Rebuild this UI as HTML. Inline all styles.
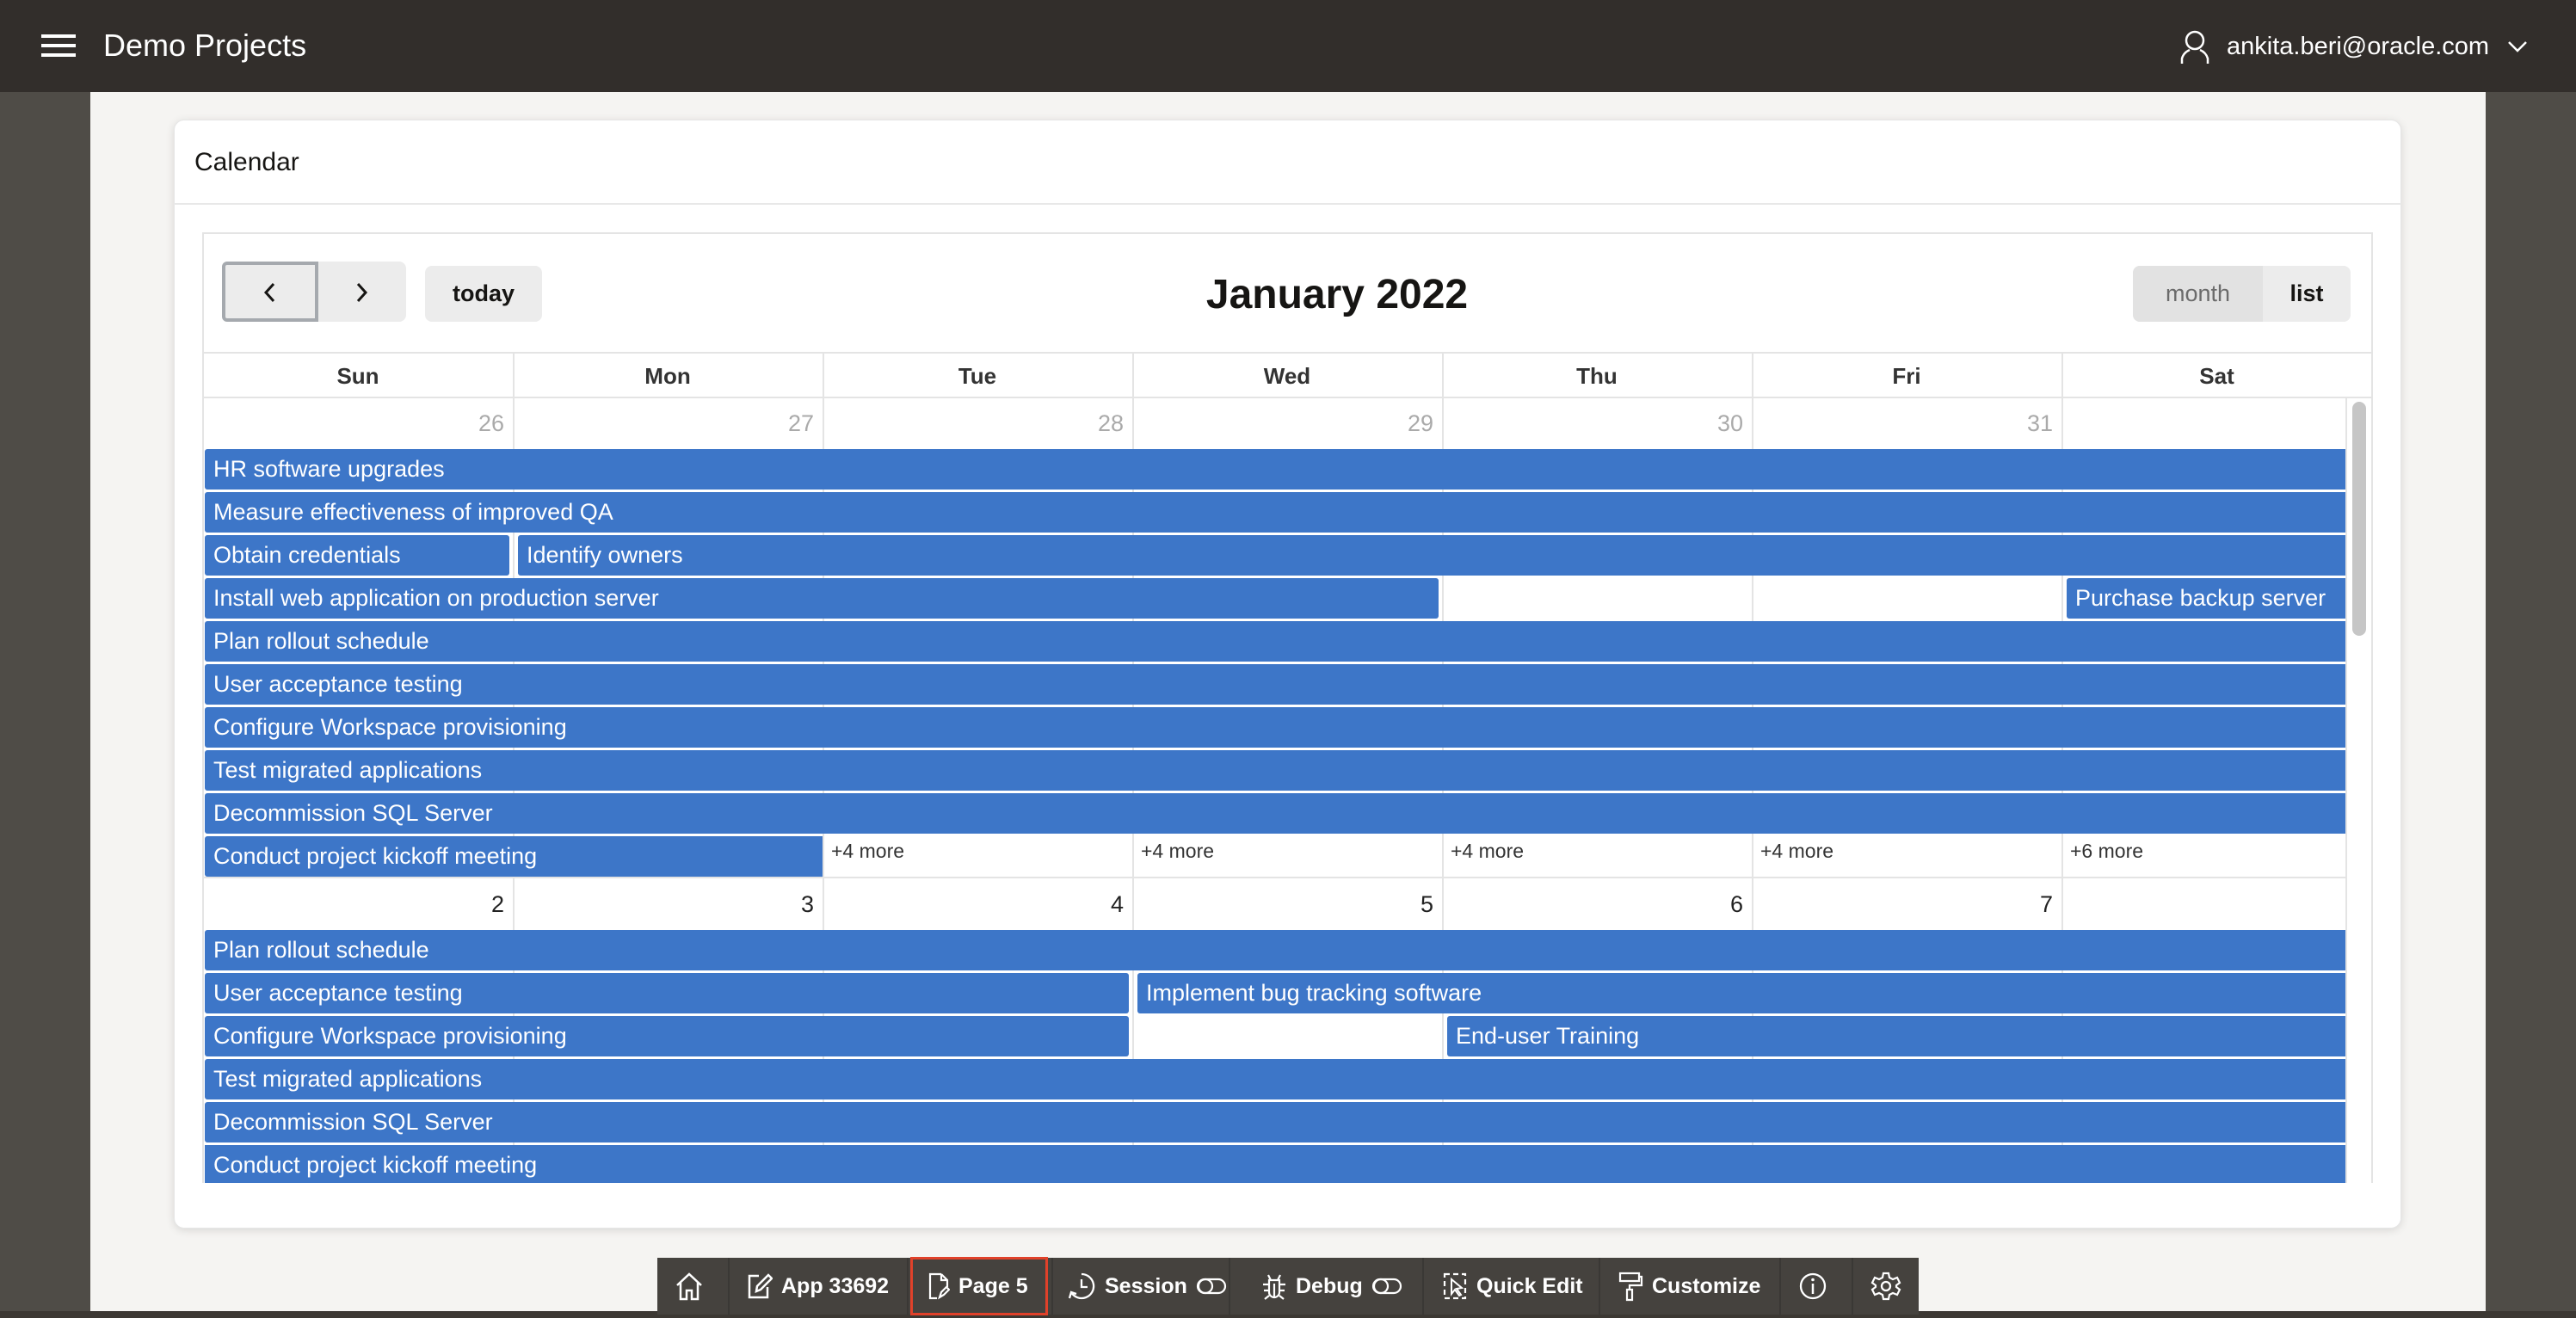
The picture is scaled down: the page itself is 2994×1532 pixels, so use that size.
<!DOCTYPE html>
<html><head><meta charset="utf-8"><style>
*{box-sizing:border-box;margin:0;padding:0}
body{width:2994px;height:1532px;position:relative;overflow:hidden;background:#f5f4f2;font-family:"Liberation Sans",sans-serif}
.a{position:absolute}
.ev{position:absolute;height:47px;background:#3d76c8;color:#fff;font-size:27px;line-height:47px;padding-left:10px;white-space:nowrap;overflow:hidden;border-radius:3px}
.ev.f{border-top-right-radius:0;border-bottom-right-radius:0}
.dn{position:absolute;font-size:27px;line-height:57px;text-align:right;width:340px}
.more{position:absolute;font-size:23px;color:#333;line-height:34px}
.vl{position:absolute;width:2px;background:#e4e4e4}
.tb{position:absolute;top:1462px;height:66px;color:#fff;font-size:25px;font-weight:bold;line-height:66px;display:flex;align-items:center;gap:10px}
.sep{position:absolute;top:1462px;height:66px;width:2px;background:#3a3835}
</style></head><body>
<div class="a" style="left:0;top:0;width:105px;height:1532px;background:#4f4c47"></div>
<div class="a" style="left:2889px;top:0;width:105px;height:1532px;background:#4f4c47"></div>
<div class="a" style="left:0;top:1524px;width:2994px;height:8px;background:#3c3833"></div>
<div class="a" style="left:0;top:0;width:2994px;height:107px;background:#322e2b"></div>
<div class="a" style="left:48px;top:40px;width:40px;height:4px;background:#fff"></div>
<div class="a" style="left:48px;top:51px;width:40px;height:4px;background:#fff"></div>
<div class="a" style="left:48px;top:62px;width:40px;height:4px;background:#fff"></div>
<div class="a" style="left:120px;top:28px;font-size:36px;color:#fff;line-height:50px">Demo Projects</div>
<svg class="a" style="left:2534px;top:34px" width="34" height="42" viewBox="0 0 34 42"><circle cx="17" cy="13" r="10" fill="none" stroke="#fff" stroke-width="2.5"/><path d="M2 40 V34 Q4 27 11 24 M32 40 V34 Q30 27 23 24" fill="none" stroke="#fff" stroke-width="2.5"/></svg>
<div class="a" style="left:2588px;top:30px;font-size:29px;color:#fff;line-height:48px">ankita.beri@oracle.com</div>
<svg class="a" style="left:2914px;top:46px" width="24" height="16"><path d="M2 3 L12 13 L22 3" fill="none" stroke="#fff" stroke-width="2.5"/></svg>
<div class="a" style="left:202px;top:139px;width:2589px;height:1289px;background:#fff;border-radius:12px;box-shadow:0 2px 10px rgba(0,0,0,.12);border:1px solid #e6e6e6"></div>
<div class="a" style="left:226px;top:168px;font-size:30px;color:#161513;line-height:42px">Calendar</div>
<div class="a" style="left:202px;top:236px;width:2589px;height:2px;background:#e8e8e8"></div>
<div class="a" style="left:235px;top:270px;width:2523px;height:1105px;border:2px solid #e4e4e4;border-bottom:none"></div>
<div class="a" style="left:258px;top:304px;width:214px;height:70px;background:#ececec;border-radius:8px"></div>
<div class="a" style="left:258px;top:304px;width:112px;height:70px;border:4px solid #a5a9ae;border-radius:6px 0 0 6px"></div>
<svg class="a" style="left:302px;top:326px" width="24" height="28"><path d="M16 4 L7 14 L16 24" fill="none" stroke="#161513" stroke-width="3"/></svg>
<svg class="a" style="left:408px;top:326px" width="24" height="28"><path d="M8 4 L17 14 L8 24" fill="none" stroke="#161513" stroke-width="3"/></svg>
<div class="a" style="left:494px;top:309px;width:136px;height:65px;background:#ececec;border-radius:8px;font-size:27px;font-weight:bold;color:#161513;line-height:65px;text-align:center">today</div>
<div class="a" style="left:1300px;top:308px;width:508px;text-align:center;font-size:48px;font-weight:bold;color:#161513;line-height:70px">January 2022</div>
<div class="a" style="left:2479px;top:309px;width:253px;height:65px;background:#ececec;border-radius:8px"></div>
<div class="a" style="left:2479px;top:309px;width:151px;height:65px;background:#e2e2e2;border-radius:8px 0 0 8px;font-size:27px;color:#6b6b6b;line-height:65px;text-align:center">month</div>
<div class="a" style="left:2630px;top:309px;width:102px;height:65px;font-size:27px;font-weight:bold;color:#161513;line-height:65px;text-align:center">list</div>
<div class="a" style="left:236px;top:409px;width:2521px;height:2px;background:#e4e4e4"></div>
<div class="a" style="left:236px;top:461px;width:2521px;height:2px;background:#e4e4e4"></div>
<div class="a" style="left:236px;top:412px;width:2521px;height:50px;font-size:26px;font-weight:bold;color:#333;line-height:50px;display:flex">
<div style="width:360px;text-align:center">Sun</div><div style="width:360px;text-align:center">Mon</div><div style="width:360px;text-align:center">Tue</div><div style="width:360px;text-align:center">Wed</div><div style="width:360px;text-align:center">Thu</div><div style="width:360px;text-align:center">Fri</div><div style="width:361px;text-align:center">Sat</div></div>
<div class="vl" style="left:596px;top:411px;height:964px"></div>
<div class="vl" style="left:956px;top:411px;height:964px"></div>
<div class="vl" style="left:1316px;top:411px;height:964px"></div>
<div class="vl" style="left:1676px;top:411px;height:964px"></div>
<div class="vl" style="left:2036px;top:411px;height:964px"></div>
<div class="vl" style="left:2396px;top:411px;height:964px"></div>
<div class="vl" style="left:2726px;top:463px;height:912px"></div>
<div class="a" style="left:2734px;top:467px;width:16px;height:272px;background:#c6c6c6;border-radius:8px"></div>
<div class="dn" style="left:246px;top:464px;color:#aaa">26</div>
<div class="dn" style="left:606px;top:464px;color:#aaa">27</div>
<div class="dn" style="left:966px;top:464px;color:#aaa">28</div>
<div class="dn" style="left:1326px;top:464px;color:#aaa">29</div>
<div class="dn" style="left:1686px;top:464px;color:#aaa">30</div>
<div class="dn" style="left:2046px;top:464px;color:#aaa">31</div>
<div class="ev f" style="left:238px;top:522px;width:2488px">HR software upgrades</div>
<div class="ev f" style="left:238px;top:572px;width:2488px">Measure effectiveness of improved QA</div>
<div class="ev" style="left:238px;top:622px;width:354px">Obtain credentials</div>
<div class="ev f" style="left:602px;top:622px;width:2124px">Identify owners</div>
<div class="ev" style="left:238px;top:672px;width:1434px">Install web application on production server</div>
<div class="ev f" style="left:2402px;top:672px;width:324px">Purchase backup server</div>
<div class="ev f" style="left:238px;top:722px;width:2488px">Plan rollout schedule</div>
<div class="ev f" style="left:238px;top:772px;width:2488px">User acceptance testing</div>
<div class="ev f" style="left:238px;top:822px;width:2488px">Configure Workspace provisioning</div>
<div class="ev f" style="left:238px;top:872px;width:2488px">Test migrated applications</div>
<div class="ev f" style="left:238px;top:922px;width:2488px">Decommission SQL Server</div>
<div class="ev f" style="left:238px;top:972px;width:718px">Conduct project kickoff meeting</div>
<div class="more" style="left:966px;top:972px">+4 more</div>
<div class="more" style="left:1326px;top:972px">+4 more</div>
<div class="more" style="left:1686px;top:972px">+4 more</div>
<div class="more" style="left:2046px;top:972px">+4 more</div>
<div class="more" style="left:2406px;top:972px">+6 more</div>
<div class="a" style="left:236px;top:1019px;width:2490px;height:2px;background:#e4e4e4"></div>
<div class="dn" style="left:246px;top:1023px;color:#222">2</div>
<div class="dn" style="left:606px;top:1023px;color:#222">3</div>
<div class="dn" style="left:966px;top:1023px;color:#222">4</div>
<div class="dn" style="left:1326px;top:1023px;color:#222">5</div>
<div class="dn" style="left:1686px;top:1023px;color:#222">6</div>
<div class="dn" style="left:2046px;top:1023px;color:#222">7</div>
<div class="ev f" style="left:238px;top:1081px;width:2488px">Plan rollout schedule</div>
<div class="ev" style="left:238px;top:1131px;width:1074px">User acceptance testing</div>
<div class="ev f" style="left:1322px;top:1131px;width:1404px">Implement bug tracking software</div>
<div class="ev" style="left:238px;top:1181px;width:1074px">Configure Workspace provisioning</div>
<div class="ev f" style="left:1682px;top:1181px;width:1044px">End-user Training</div>
<div class="ev f" style="left:238px;top:1231px;width:2488px">Test migrated applications</div>
<div class="ev f" style="left:238px;top:1281px;width:2488px">Decommission SQL Server</div>
<div class="ev f" style="left:238px;top:1331px;width:2488px;height:44px;border-radius:0">Conduct project kickoff meeting</div>
<div class="a" style="left:764px;top:1462px;width:1466px;height:66px;background:#45423e"></div>
<div class="sep" style="left:846px"></div><div class="sep" style="left:1054px"></div><div class="sep" style="left:1222px"></div><div class="sep" style="left:1428px"></div><div class="sep" style="left:1653px"></div><div class="sep" style="left:1858px"></div><div class="sep" style="left:2068px"></div><div class="sep" style="left:2152px"></div>
<div class="a" style="left:1058px;top:1461px;width:160px;height:68px;border:3px solid #e0412a"></div>
<svg class="a" style="left:783px;top:1477px" width="36" height="36" viewBox="0 0 36 36"><path d="M4 17 L18 4 L32 17 M8 14 V33 H15 V23 H21 V33 H28 V14" fill="none" stroke="#fff" stroke-width="2.5"/></svg>
<div class="tb" style="left:868px"><svg width="30" height="32" viewBox="0 0 30 32"><path d="M14 4 H3 V29 H24 V17 M11 22 L12 16 L25 3 L29 7 L16 20 Z" fill="none" stroke="#fff" stroke-width="2.5"/></svg>App 33692</div>
<div class="tb" style="left:1078px"><svg width="26" height="34" viewBox="0 0 26 34"><path d="M16 3 H3 V31 H11 M16 3 L23 10 V18 M16 3 V10 H23 M14 30 L16 24 L22 18 L25 21 L19 27 Z" fill="none" stroke="#fff" stroke-width="2.2"/></svg>Page 5</div>
<div class="tb" style="left:1240px"><svg width="34" height="34" viewBox="0 0 34 34"><path d="M17 3 A14 14 0 1 1 5 24 M17 9 V18 H24 M3 31 L5 24 L11 26" fill="none" stroke="#fff" stroke-width="2.3"/></svg>Session<svg width="36" height="22" viewBox="0 0 36 22"><rect x="2" y="3" width="32" height="16" rx="8" fill="none" stroke="#fff" stroke-width="2.2"/><circle cx="11" cy="11" r="8" fill="none" stroke="#fff" stroke-width="2.2"/></svg></div>
<div class="tb" style="left:1466px"><svg width="30" height="34" viewBox="0 0 30 34"><path d="M9 10 H21 V24 A6 6 0 0 1 9 24 Z M11 10 L8 4 M19 10 L22 4 M9 15 H2 M21 15 H28 M9 22 H3 M21 22 H27 M9 28 L4 32 M21 28 L26 32 M15 14 V30" fill="none" stroke="#fff" stroke-width="2.2"/></svg>Debug<svg width="36" height="22" viewBox="0 0 36 22"><rect x="2" y="3" width="32" height="16" rx="8" fill="none" stroke="#fff" stroke-width="2.2"/><circle cx="11" cy="11" r="8" fill="none" stroke="#fff" stroke-width="2.2"/></svg></div>
<div class="tb" style="left:1676px"><svg width="30" height="34" viewBox="0 0 30 34"><path d="M3 3 H27 V31 H3 Z" fill="none" stroke="#fff" stroke-width="2.2" stroke-dasharray="6 4"/><path d="M11 9 L11 26 L15 21 L20 28 L22 27 L17 20 L23 19 Z" fill="none" stroke="#fff" stroke-width="2"/></svg>Quick Edit</div>
<div class="tb" style="left:1880px"><svg width="30" height="36" viewBox="0 0 30 36"><path d="M3 3 H25 V12 H3 Z M25 7 H28 V17 H14 V22 M11 22 H17 V34 H11 Z" fill="none" stroke="#fff" stroke-width="2.2"/></svg>Customize</div>
<svg class="a" style="left:2090px;top:1478px" width="34" height="34" viewBox="0 0 34 34"><circle cx="17" cy="17" r="14" fill="none" stroke="#fff" stroke-width="2.3"/><path d="M17 14 V26" stroke="#fff" stroke-width="2.5"/><circle cx="17" cy="9.5" r="1.8" fill="#fff"/></svg>
<svg class="a" style="left:2174px;top:1477px" width="36" height="36" viewBox="0 0 36 36"><circle cx="18" cy="18" r="5" fill="none" stroke="#fff" stroke-width="2.3"/><path d="M15 3 H21 L22 8 L26 10 L31 8 L34 14 L30 17 V19 L34 22 L31 28 L26 26 L22 28 L21 33 H15 L14 28 L10 26 L5 28 L2 22 L6 19 V17 L2 14 L5 8 L10 10 L14 8 Z" fill="none" stroke="#fff" stroke-width="2.2"/></svg>
</body></html>
